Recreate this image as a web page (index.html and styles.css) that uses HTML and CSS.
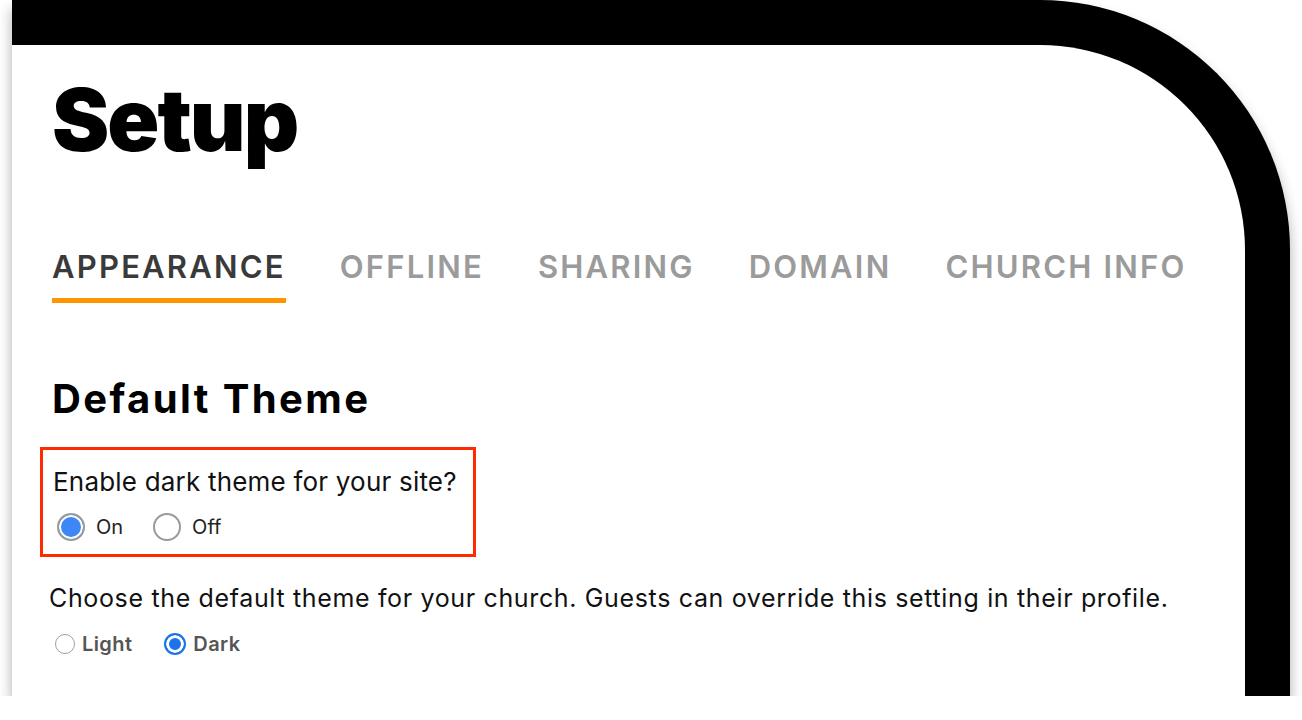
FILE: index.html
```html
<!DOCTYPE html>
<html>
<head>
  <title>Setup</title>
  <link rel="stylesheet" href="styles.css">
</head>
<body>
  <div class="device">
    <div class="screen">
      <h1 class="page-title">Setup</h1>

      <nav class="tabs">
        <a class="tab tab-active">APPEARANCE</a>
        <a class="tab">OFFLINE</a>
        <a class="tab">SHARING</a>
        <a class="tab">DOMAIN</a>
        <a class="tab">CHURCH INFO</a>
      </nav>

      <h2 class="section-title">Default Theme</h2>

      <div class="highlight">
        <p class="question">Enable dark theme for your site?</p>
        <div class="options">
          <label class="option"><span class="radio radio-on"></span>On</label>
          <label class="option"><span class="radio"></span>Off</label>
        </div>
      </div>

      <p class="hint">Choose the default theme for your church. Guests can override this setting in their profile.</p>
      <div class="options options-small">
        <label class="option"><span class="radio"></span>Light</label>
        <label class="option"><span class="radio radio-checked"></span>Dark</label>
      </div>
    </div>
  </div>
</body>
</html>
```

FILE: styles.css
```css
html, body {
  margin: 0;
  background: #fff;
}
body {
  font-family: Inter, "Liberation Sans", sans-serif;
  color: #111;
  overflow: hidden;
}
.device {
  margin-left: 12px;
  width: 1278px;
  height: 696px;
  box-sizing: border-box;
  border-top: 45px solid #000;
  border-right: 45px solid #000;
  border-top-right-radius: 250px;
  background: #fff;
  box-shadow: 0 9px 14px rgba(0, 0, 0, 0.32);
}
.screen {
  padding: 32px 0 0 40px;
}
.page-title {
  margin: 0;
  font-size: 86px;
  line-height: 86px;
  font-weight: 900;
  letter-spacing: -2px;
  color: #000;
}
.tabs {
  display: flex;
  gap: 54px;
  margin-top: 88px;
}
.tab {
  font-size: 31px;
  line-height: 31px;
  font-weight: 600;
  letter-spacing: 2.2px;
  color: #9b9b9b;
  padding-bottom: 16px;
  border-bottom: 5px solid transparent;
}
.tab-active {
  color: #3a3a3a;
  border-bottom-color: #ff9500;
}
.section-title {
  margin: 76px 0 0;
  font-size: 40px;
  line-height: 40px;
  font-weight: 700;
  letter-spacing: 2.4px;
  color: #000;
}
.highlight {
  margin: 28px 0 0 -12px;
  width: 436px;
  box-sizing: border-box;
  border: 3px solid #ff2a00;
  padding: 19px 0 13px 10px;
}
.question {
  margin: 0;
  font-size: 26px;
  line-height: 26px;
  letter-spacing: 0.2px;
}
.options {
  display: flex;
  gap: 30px;
  margin-top: 18px;
  padding-left: 4px;
}
.option {
  display: flex;
  align-items: center;
  gap: 11px;
  font-size: 20px;
  color: #222;
}
.radio {
  width: 24px;
  height: 24px;
  border-radius: 50%;
  border: 2px solid #9a9a9a;
  background: #fff;
  box-sizing: content-box;
}
.radio-on {
  background: #3d86f6;
  box-shadow: inset 0 0 0 2px #fff;
}
.hint {
  margin: 29px 0 0 -3px;
  font-size: 25px;
  line-height: 25px;
  letter-spacing: 0.65px;
}
.options-small {
  margin-top: 21px;
  gap: 32px;
  padding-left: 3px;
}
.options-small .option {
  gap: 7px;
  font-weight: 600;
  letter-spacing: 0.4px;
  color: #555;
}
.options-small .radio {
  width: 18px;
  height: 18px;
  border-width: 1.5px;
  border-color: #a0a0a0;
}
.options-small .radio-checked {
  border: 2px solid #1a73e8;
  background: #1a73e8;
  box-shadow: inset 0 0 0 3px #fff;
}
```
